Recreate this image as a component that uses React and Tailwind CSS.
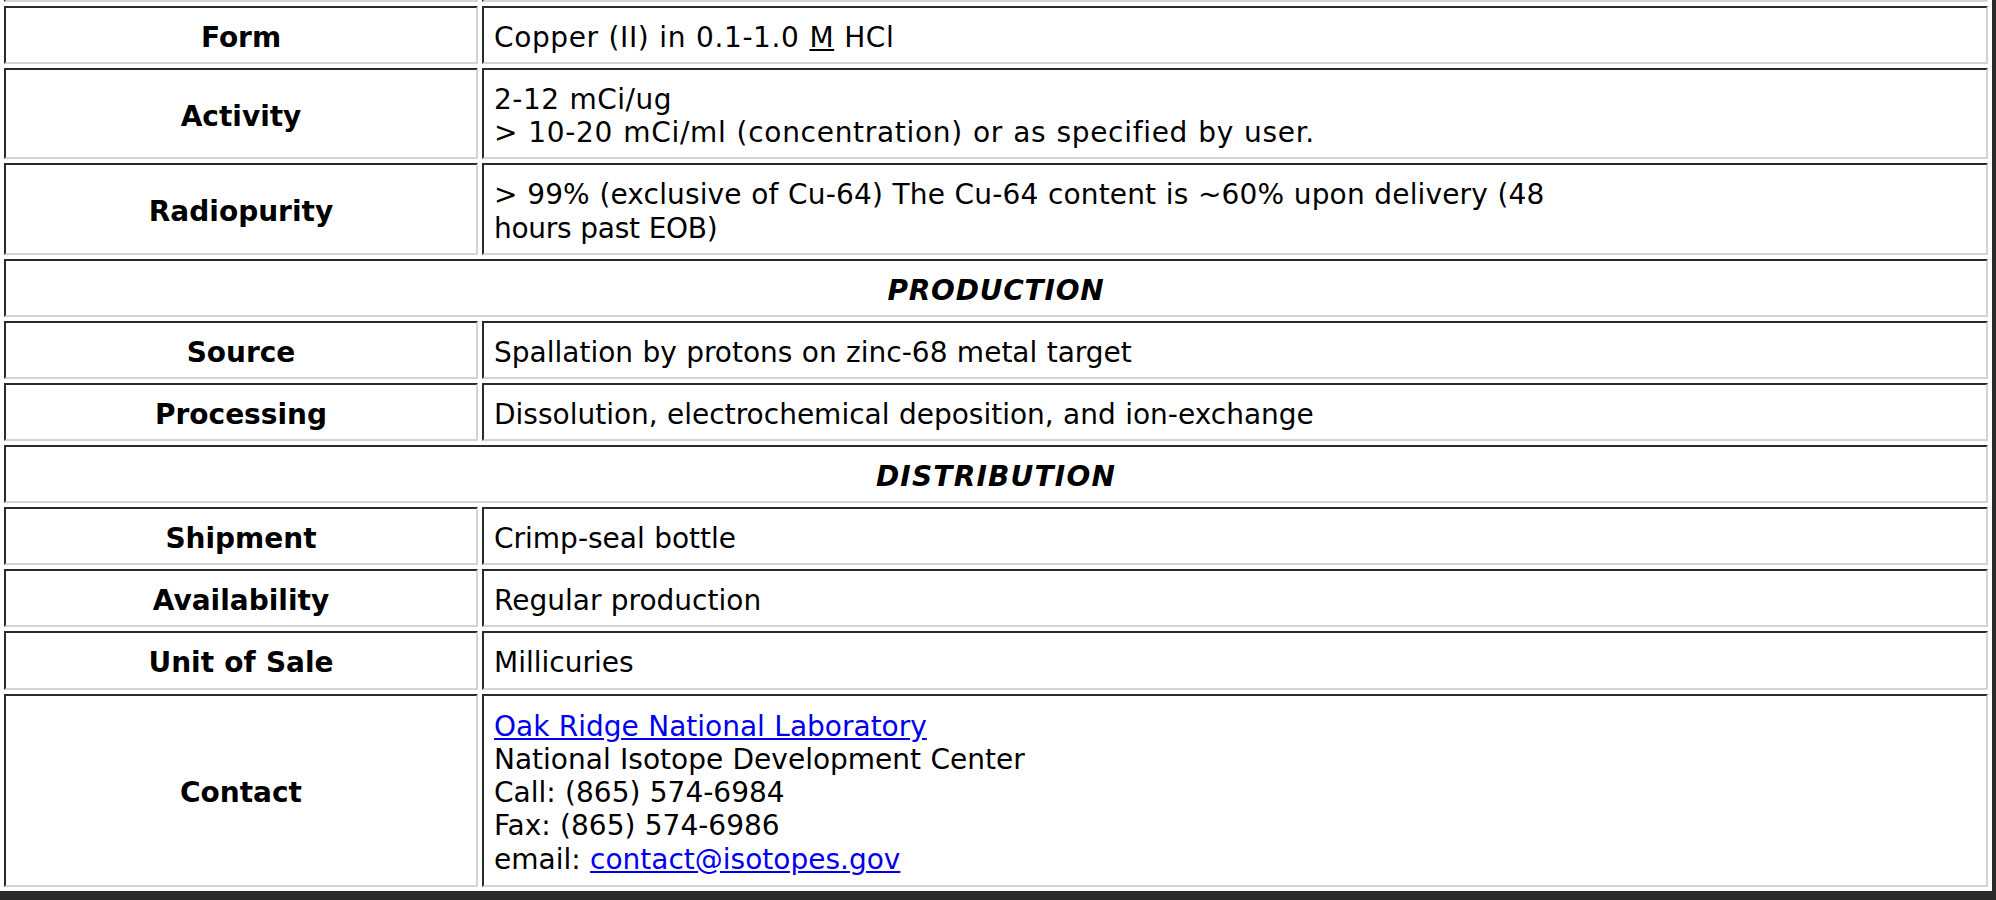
import React from "react";

const BORDER =
  "border-2 border-t-[#2b2b2b] border-l-[#2b2b2b] border-b-[#d4d4d4] border-r-[#d4d4d4] px-[10px] align-middle";
const LBL = `${BORDER} w-[474px] pt-[12.8px] pb-[8px] text-center font-bold`;
const VAL = `${BORDER} pt-[12.8px] pb-[8px] text-left`;
const SEC = `${BORDER} pt-[12.8px] pb-[8px] text-center font-bold italic`;

function Row({ label, children, tall }) {
  return (
    <tr>
      <td
        className={
          tall ? `${BORDER} w-[474px] pt-[14px] pb-[9px] text-center font-bold` : LBL
        }
      >
        {label}
      </td>
      <td className={tall ? `${BORDER} pt-[14px] pb-[9px] text-left` : VAL}>
        {children}
      </td>
    </tr>
  );
}

function Section({ title, track }) {
  return (
    <tr>
      <td colSpan={2} className={SEC}>
        <span className={track}>{title}</span>
      </td>
    </tr>
  );
}

export default function App() {
  return (
    <div className="w-[1996px] h-[900px] overflow-hidden bg-white text-black font-['DejaVu_Sans',Verdana,sans-serif] text-[28px] leading-[33.3px] [word-spacing:0.5px]">
      <table className="w-[1996px] -mt-[4px] border-separate border-spacing-[4px] border-r-[4px] border-b-[10px] border-r-[#2b2b2b] border-b-[#2b2b2b] bg-white">
        <tbody>
          <tr>
            <td className="w-[474px] h-[2px] p-0 border-l-2 border-b-2 border-l-[#2b2b2b] border-b-[#d4d4d4]"></td>
            <td className="h-[2px] p-0 border-l-2 border-b-2 border-l-[#2b2b2b] border-b-[#d4d4d4]"></td>
          </tr>
          <Row label="Form">
            <span className="tracking-[0.6px]">
              Copper (II) in 0.1-1.0 <span className="underline">M</span> HCl
            </span>
          </Row>
          <Row label="Activity">
            <span className="tracking-[0.5px]">2-12 mCi/ug</span>
            <br />
            <span className="tracking-[0.7px]">
              &gt; 10-20 mCi/ml (concentration) or as specified by user.
            </span>
          </Row>
          <Row label="Radiopurity">
            <span className="tracking-[0.15px]">
              &gt; 99% (exclusive of Cu-64) The Cu-64 content is ~60% upon delivery (48
            </span>
            <br />
            <span className="tracking-[-0.3px]">hours past EOB)</span>
          </Row>
          <Section title="PRODUCTION" track="tracking-[0.8px]" />
          <Row label="Source">Spallation by protons on zinc-68 metal target</Row>
          <Row label="Processing">
            Dissolution, electrochemical deposition, and ion-exchange
          </Row>
          <Section title="DISTRIBUTION" track="tracking-[1.2px]" />
          <Row label="Shipment">Crimp-seal bottle</Row>
          <Row label="Availability">Regular production</Row>
          <Row label="Unit of Sale">Millicuries</Row>
          <Row label="Contact" tall>
            <a href="#" className="text-[#0000ee] underline">
              Oak Ridge National Laboratory
            </a>
            <br />
            National Isotope Development Center
            <br />
            Call: (865) 574-6984
            <br />
            Fax: (865) 574-6986
            <br />
            email:{" "}
            <a href="#" className="text-[#0000ee] underline">
              contact@isotopes.gov
            </a>
          </Row>
        </tbody>
      </table>
    </div>
  );
}
